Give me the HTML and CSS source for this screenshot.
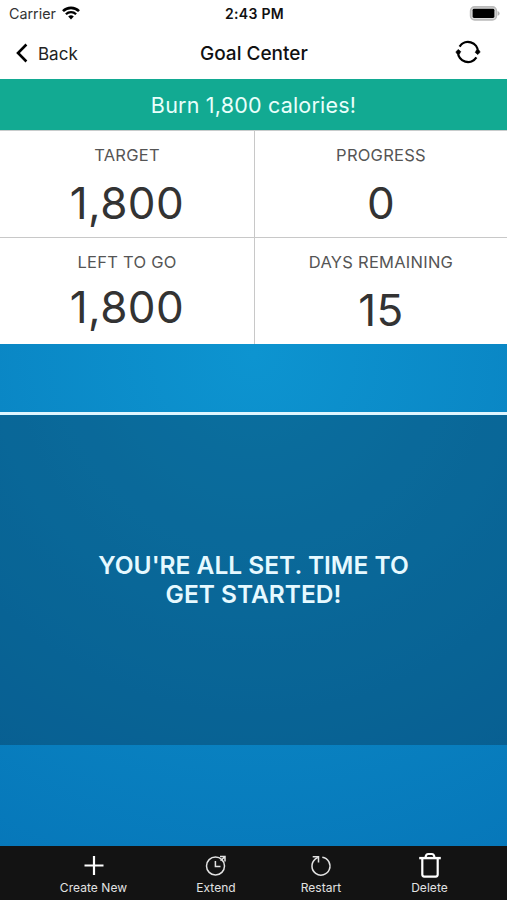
FILE: index.html
```html
<!DOCTYPE html>
<html lang="en">
<head>
    <meta charset="UTF-8">
    <meta name="viewport" content="width=device-width, initial-scale=1.0">
    <title>Goal Center</title>
    <link rel="stylesheet" href="styles.css">
</head>
<body>
    <div class="status-bar">
        <div class="carrier">
            <span>Carrier</span>
            <svg class="wifi" width="18" height="14" viewBox="0 0 18 14">
                <path d="M1 5.2 A11.3 11.3 0 0 1 17 5.2" fill="none" stroke="#000" stroke-width="2.6"/>
                <path d="M3.9 8.2 A7.2 7.2 0 0 1 14.1 8.2" fill="none" stroke="#000" stroke-width="2.3"/>
                <path d="M6.2 10.6 A4 4 0 0 1 11.8 10.6 L9 13.6 Z" fill="#000"/>
            </svg>
        </div>
        <span class="time">2:43 PM</span>
        <svg class="battery" width="31" height="15" viewBox="0 0 31 15">
            <rect x="1.6" y="0.9" width="25.8" height="13" rx="4" fill="#ddd" stroke="#bbb" stroke-width="1.6"/>
            <rect x="3.6" y="2.8" width="21.8" height="9.2" rx="1.4" fill="#000"/>
            <path d="M28.6 5 Q30.6 5.6 30.6 7.4 Q30.6 9.2 28.6 9.8 Z" fill="#b4b4b4"/>
        </svg>
    </div>

    <div class="nav-bar">
        <div class="back">
            <svg width="12" height="20" viewBox="0 0 12 20">
                <path d="M10.4 1.5 L2 10 L10.4 18.5" fill="none" stroke="#000" stroke-width="2.6"/>
            </svg>
            <span>Back</span>
        </div>
        <h1 class="title">Goal Center</h1>
        <svg class="sync" width="26" height="24" viewBox="0 0 26 24">
            <path d="M4.6 6.6 A10 10 0 0 1 23 12" fill="none" stroke="#000" stroke-width="2.3"/>
            <path d="M3 12 A10 10 0 0 0 21.4 17.4" fill="none" stroke="#000" stroke-width="2.3"/>
            <path d="M0.8 12 L3.2 9.4 L5.8 11.6 L4.4 14 L2.2 14 Z" fill="#000" stroke="#000" stroke-width="0.6"/>
            <path d="M25.2 12 L22.8 14.6 L20.2 12.4 L21.6 10 L23.8 10 Z" fill="#000" stroke="#000" stroke-width="0.6"/>
        </svg>
    </div>

    <div class="banner">Burn 1,800 calories!</div>

    <div class="stats">
        <div class="stat">
            <p class="label">TARGET</p>
            <p class="value">1,800</p>
        </div>
        <div class="stat">
            <p class="label">PROGRESS</p>
            <p class="value">0</p>
        </div>
        <div class="stat">
            <p class="label">LEFT TO GO</p>
            <p class="value left-value">1,800</p>
        </div>
        <div class="stat">
            <p class="label">DAYS REMAINING</p>
            <p class="value">15</p>
        </div>
    </div>

    <div class="chart-area">
        <div class="message">YOU'RE ALL SET. TIME TO<br>GET STARTED!</div>
    </div>

    <div class="toolbar">
        <div class="tool">
            <svg width="24" height="26" viewBox="0 0 24 26">
                <path d="M12 4 V23 M2.5 13.5 H21.5" stroke="#fff" stroke-width="2.2"/>
            </svg>
            <span>Create New</span>
        </div>
        <div class="tool">
            <svg width="24" height="26" viewBox="0 0 24 26" fill="none" stroke="#e2e2e2" stroke-width="1.5">
                <circle cx="11.5" cy="14" r="9"/>
                <path d="M11.4 9 V14.5 H16.5"/>
                <path d="M16 4.6 H21 V9.6 M20.8 4.8 L16.6 8.8"/>
            </svg>
            <span>Extend</span>
        </div>
        <div class="tool">
            <svg width="24" height="26" viewBox="0 0 24 26" fill="none" stroke="#e2e2e2" stroke-width="1.5">
                <path d="M13.3 5.2 A9 9 0 1 1 6.2 7.2 L8.8 5.4"/>
                <path d="M3.7 4.7 H9.5 V10.4"/>
            </svg>
            <span>Restart</span>
        </div>
        <div class="tool">
            <svg width="24" height="26" viewBox="0 0 24 26" fill="none" stroke="#fff" stroke-width="2.2">
                <path d="M1.2 6.1 H22.8" stroke-width="2.4"/>
                <path d="M7.5 5.4 Q8 2 10.2 2 H13.8 Q16 2 16.5 5.4"/>
                <path d="M4.3 6 V22.6 Q4.3 24.6 6.3 24.6 H17.7 Q19.7 24.6 19.7 22.6 V6"/>
            </svg>
            <span>Delete</span>
        </div>
    </div>
</body>
</html>
```
FILE: styles.css
```css
* {
    box-sizing: border-box;
}
body {
    margin: 0;
    width: 507px;
    height: 900px;
    display: flex;
    flex-direction: column;
    overflow: hidden;
    background: #fff;
    color: #111;
    font-family: Inter, "Liberation Sans", sans-serif;
}
p, h1 {
    margin: 0;
}
svg {
    display: block;
    flex: none;
}
.status-bar {
    height: 28px;
    padding: 0 7px 0 9px;
    display: grid;
    grid-template-columns: 1fr auto 1fr;
    align-items: center;
    font-size: 14px;
}
.carrier {
    display: flex;
    gap: 6px;
    align-items: center;
    color: #333;
}
.carrier span {
    font-size: 14.3px;
    margin-top: -2px;
}
.wifi {
    margin-top: -3px;
}
.time {
    font-weight: 600;
    font-size: 14px;
    letter-spacing: 0.3px;
    margin-top: -1px;
}
.battery {
    justify-self: end;
    margin-top: -2px;
}
.nav-bar {
    height: 51px;
    padding: 0 26px 1px 16px;
    display: grid;
    grid-template-columns: 184px 1fr 26px;
    align-items: center;
}
.back {
    display: flex;
    align-items: center;
    gap: 10px;
    font-size: 17px;
    color: #222;
}
.back span {
    margin-top: 1px;
}
.title {
    font-size: 19px;
    font-weight: 500;
}
.sync {
    margin-top: -2px;
}
.banner {
    height: 51px;
    background: #12aa92;
    color: #e9fffb;
    font-size: 21.5px;
    line-height: 52px;
    letter-spacing: 0.2px;
    text-align: center;
}
.stats {
    height: 214px;
    display: grid;
    grid-template-columns: 254px 253px;
    grid-template-rows: 107px 107px;
    border-top: 1px solid #c8cccc;
}
.stat {
    text-align: center;
    border-bottom: 1px solid #c8c8c8;
}
.stat:nth-child(even) {
    border-left: 1px solid #c8c8c8;
}
.label {
    padding-top: 14px;
    font-size: 16.5px;
    line-height: 20px;
    letter-spacing: 0.25px;
    color: #555;
}
.value {
    margin-top: 12px;
    font-size: 44px;
    line-height: 52px;
    letter-spacing: 0.4px;
    color: #333;
}
.left-value {
    margin-top: 9px;
}
.chart-area {
    height: 502px;
    padding-top: 68px;
    background: radial-gradient(circle 600px at 254px 10px, #0d94d0 0%, #0982c1 60%, #0675b8 100%);
}
.message {
    height: 333px;
    border-top: 3px solid #dff6ff;
    padding-top: 136px;
    background: rgba(8, 40, 65, 0.34);
    background-clip: padding-box;
    color: #e6f9ff;
    font-size: 24.5px;
    font-weight: 600;
    line-height: 29px;
    text-align: center;
}
.toolbar {
    height: 54px;
    padding: 6px 0 0 32px;
    display: grid;
    grid-template-columns: 123px 122px 88px 129px;
    background: #131313;
    color: #e2e2e2;
    font-size: 12px;
}
.tool {
    display: flex;
    flex-direction: column;
    align-items: center;
    gap: 2px;
}
.tool span {
    line-height: 16px;
    letter-spacing: 0.05px;
}
```
